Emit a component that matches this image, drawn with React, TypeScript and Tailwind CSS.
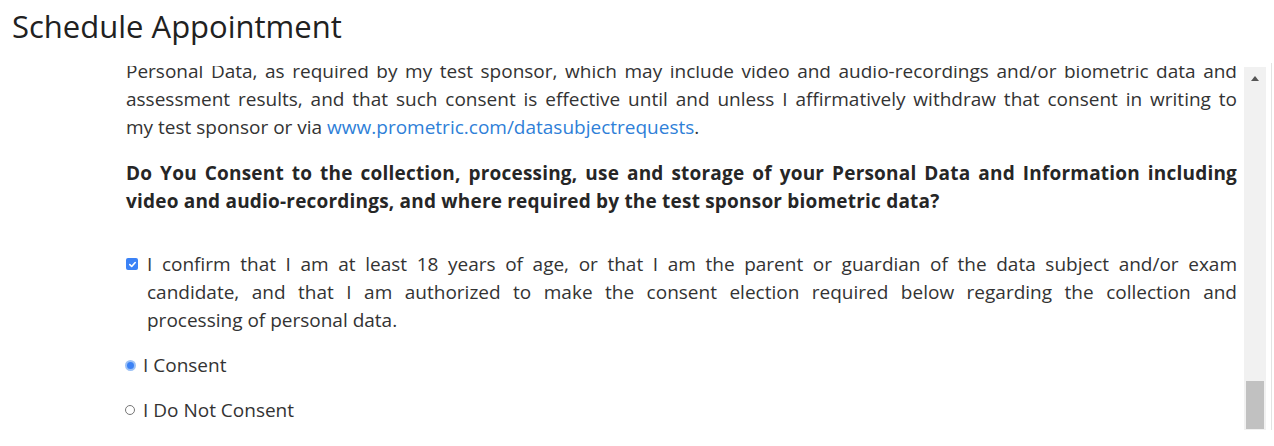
import React from 'react';

const Line: React.FC<{ children: React.ReactNode; last?: boolean }> = ({ children, last }) => (
  <div className={last ? 'whitespace-nowrap' : 'text-justify [text-align-last:justify] whitespace-nowrap'}>{children}</div>
);

const App: React.FC = () => {
  return (
    <div className="w-[1274px] h-[446px] bg-white overflow-hidden text-[#333333] font-['Open_Sans',_'Liberation_Sans',_sans-serif]">
      <div className="h-[63px] pl-[12px] pt-[6px]">
        <h1 className="text-[31px] leading-[40px] text-[#212121]">Schedule Appointment</h1>
      </div>

      <div className="flex h-[383px]">
        {/* scrolled consent text */}
        <div className="flex-1 h-[367px] pt-[3px] pl-[125px] pr-[7px] text-[19px] leading-[28px]">
          <div className="h-[364px] overflow-hidden pl-[1px]">
            <div className="-mt-[9px]">
              <Line>Personal Data, as required by my test sponsor, which may include video and audio-recordings and/or biometric data and</Line>
              <Line>assessment results, and that such consent is effective until and unless I affirmatively withdraw that consent in writing to</Line>
              <Line last>
                my test sponsor or via <a className="text-[#2f7fd8]">www.prometric.com/datasubjectrequests</a>.
              </Line>
            </div>

            <div className="mt-[18px] font-bold tracking-[0.2px] text-[#262626]">
              <Line>Do You Consent to the collection, processing, use and storage of your Personal Data and Information including</Line>
              <Line last>video and audio-recordings, and where required by the test sponsor biometric data?</Line>
            </div>

            <div className="mt-[35px] flex">
              <div className="w-[21px] shrink-0 pt-[8px]">
                <div className="w-[12px] h-[12px] rounded-[2px] bg-[#3b82f6] flex items-center justify-center">
                  <svg width="9" height="9" viewBox="0 0 10 10" fill="none">
                    <path d="M2 5.2 L4.1 7.2 L8 2.8" stroke="white" strokeWidth="1.8" strokeLinecap="round" strokeLinejoin="round" />
                  </svg>
                </div>
              </div>
              <div className="flex-1">
                <Line>I confirm that I am at least 18 years of age, or that I am the parent or guardian of the data subject and/or exam</Line>
                <Line>candidate, and that I am authorized to make the consent election required below regarding the collection and</Line>
                <Line last>processing of personal data.</Line>
              </div>
            </div>

            <div className="mt-[17px] flex items-center h-[28px]">
              <div className="w-[11px] h-[11px] rounded-full border-[2px] border-[#9cc1f5] bg-[#3b82f6] mr-[7px] -ml-[1px]" />
              <span>I Consent</span>
            </div>

            <div className="mt-[17px] flex items-center h-[28px]">
              <div className="w-[10px] h-[10px] rounded-full border border-[#767676] bg-white mr-[8px] -ml-[1px]" />
              <span>I Do Not Consent</span>
            </div>
          </div>
        </div>

        {/* scrollbar */}
        <div className="w-[22px] h-[363px] mt-[4px] bg-[#f1f1f1] flex flex-col items-center">
          <div className="h-[18px] flex items-center justify-center mt-[2px]">
            <svg width="8" height="5" viewBox="0 0 8 5">
              <path d="M0 5 L4 0 L8 5 Z" fill="#555555" />
            </svg>
          </div>
          <div className="flex-1" />
          <div className="w-[18px] h-[48px] bg-[#c1c1c1] mb-[1px]" />
        </div>
        <div className="w-[5px]" />
        <div className="w-[1px] h-[367px] bg-[#e3e3e3]" />
        <div className="w-[2px]" />
      </div>
    </div>
  );
};

export default App;
